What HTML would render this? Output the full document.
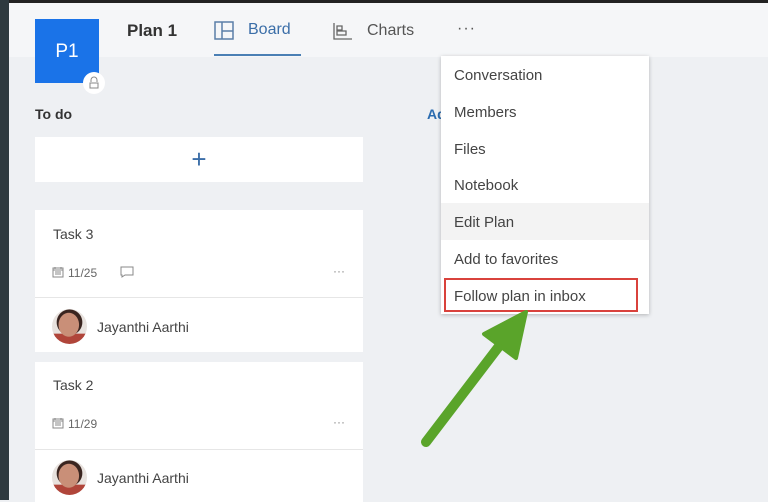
<!DOCTYPE html>
<html><head><style>
*{margin:0;padding:0;box-sizing:border-box}
body{width:768px;height:500px;overflow:hidden;background:#eef0f3;font-family:"Liberation Sans",sans-serif;position:relative;color:#333}
.a{position:absolute}
.card{position:absolute;left:35px;width:328px;background:#fff}
.t{font-size:14px;color:#444}
.m{font-size:15px;color:#444;position:absolute;left:13px}
.av{background:radial-gradient(ellipse 30% 35% at 48% 45%,#c98f78 0 95%,transparent 100%),radial-gradient(circle at 50% 38%,#3a2520 0 45%,transparent 47%),linear-gradient(#e8e2de 0 70%,#b0453a 71%);}
</style></head><body>
<div class="a" style="left:0;top:0;width:768px;height:3px;background:#222"></div>
<div class="a" style="left:0;top:0;width:9px;height:500px;background:#2f3a3f"></div>
<div class="a" style="left:9px;top:3px;width:759px;height:54px;background:#f5f6f8"></div>
<div class="a" style="left:35px;top:19px;width:64px;height:64px;background:#1a73e8;color:#fff;font-size:19px;text-align:center;line-height:66px">P1</div>
<div class="a" style="left:83px;top:72px;width:22px;height:22px;border-radius:50%;background:#fff"></div>
<svg class="a" style="left:88px;top:76px" width="12" height="14"><path d="M3 6V4a3 3 0 0 1 6 0v2M2 7h8v5H2z" fill="none" stroke="#888" stroke-width="1"/></svg>
<div class="a" style="left:127px;top:21px;font-size:17px;font-weight:bold;color:#333">Plan 1</div>
<svg class="a" style="left:214px;top:21px" width="20" height="19"><path d="M1 1h18v17H1zM8 1v17M8 10h11" fill="none" stroke="#5b7fa8" stroke-width="1.5"/></svg>
<div class="a" style="left:248px;top:21px;font-size:16px;color:#3b6ea8">Board</div>
<div class="a" style="left:214px;top:54px;width:87px;height:2px;background:#4a7fb4"></div>
<svg class="a" style="left:333px;top:22px" width="20" height="18"><path d="M1 1v16h18M4 4h5v4H4zM4 9h9v4H4z" fill="none" stroke="#666" stroke-width="1.3"/></svg>
<div class="a" style="left:367px;top:22px;font-size:16px;color:#555">Charts</div>
<div class="a" style="left:457px;top:20px;font-size:16px;color:#555;letter-spacing:1px">···</div>
<div class="a" style="left:35px;top:106px;font-size:14px;font-weight:bold;color:#333">To do</div>
<div class="a" style="left:427px;top:106px;font-size:14px;font-weight:bold;color:#2b6cb0">Ad</div>
<div class="card" style="top:137px;height:45px;text-align:center;font-size:26px;line-height:44px;color:#3b6ea8;font-weight:300">+</div>
<div class="card" style="top:210px;height:142px">
<div class="a t" style="left:18px;top:16px">Task 3</div>
<svg class="a" style="left:17px;top:56px" width="12" height="12"><path d="M1 2h10v9H1zM1 4h10M3 1v2M9 1v2M3 6h6M3 8h6" fill="none" stroke="#888" stroke-width="1"/></svg>
<div class="a" style="left:33px;top:56px;font-size:12px;color:#666">11/25</div>
<svg class="a" style="left:85px;top:56px" width="14" height="12"><path d="M1 1h12v8H5l-3 2V9H1z" fill="none" stroke="#888" stroke-width="1"/></svg>
<div class="a" style="right:18px;top:54px;font-size:12px;color:#888">···</div>
<div class="a" style="left:0;top:87px;width:328px;height:1px;background:#e6e6e6"></div>
<div class="a av" style="left:17px;top:99px;width:35px;height:35px;border-radius:50%"></div>
<div class="a t" style="left:62px;top:109px">Jayanthi Aarthi</div>
</div>
<div class="card" style="top:362px;height:140px">
<div class="a t" style="left:18px;top:15px">Task 2</div>
<svg class="a" style="left:17px;top:55px" width="12" height="12"><path d="M1 2h10v9H1zM1 4h10M3 1v2M9 1v2M3 6h6M3 8h6" fill="none" stroke="#888" stroke-width="1"/></svg>
<div class="a" style="left:33px;top:55px;font-size:12px;color:#666">11/29</div>
<div class="a" style="right:18px;top:53px;font-size:12px;color:#888">···</div>
<div class="a" style="left:0;top:87px;width:328px;height:1px;background:#e6e6e6"></div>
<div class="a av" style="left:17px;top:98px;width:35px;height:35px;border-radius:50%"></div>
<div class="a t" style="left:62px;top:108px">Jayanthi Aarthi</div>
</div>
<div class="a" style="left:441px;top:56px;width:208px;height:258px;background:#fff;box-shadow:0 1px 4px rgba(0,0,0,.25)">
<div class="m" style="top:11px">Conversation</div>
<div class="m" style="top:48px">Members</div>
<div class="m" style="top:85px">Files</div>
<div class="m" style="top:121px">Notebook</div>
<div class="a" style="left:0;top:147px;width:208px;height:37px;background:#f3f3f3"></div>
<div class="m" style="top:158px">Edit Plan</div>
<div class="m" style="top:195px">Add to favorites</div>
<div class="a" style="left:3px;top:222px;width:194px;height:34px;border:2px solid #d9423c"></div>
<div class="m" style="top:232px">Follow plan in inbox</div>
</div>
<svg class="a" style="left:0;top:0" width="768" height="500"><path d="M426 442L500 345" stroke="#5aa42a" stroke-width="10" stroke-linecap="round"/><path d="M526 312L484 334L516 358Z" fill="#5aa42a" stroke="#5aa42a" stroke-width="4" stroke-linejoin="round"/></svg>
</body></html>
